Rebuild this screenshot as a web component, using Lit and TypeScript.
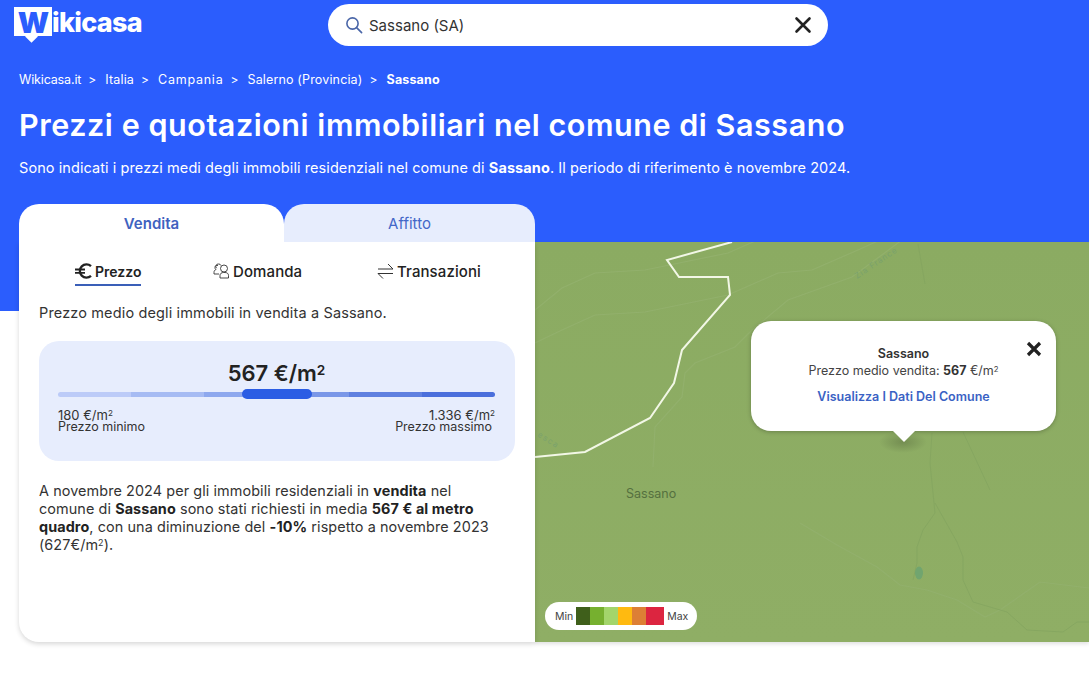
import { LitElement, css, html, svg } from "lit";
import { customElement } from "lit/decorators.js";

const legend = ["#3f5f1b", "#76b02f", "#a3d56b", "#ffba10", "#dd7f35", "#dc2540"];
const scale = ["#bccbf8", "#a6bbf3", "#8ea8ee", "#7a97e8", "#5f80e0", "#4b6fdc"];

// faint roads and contours, in map coordinates
const roads = [
  "M0 68 L27 46 L60 31 L110 28 L193 11 L243 -11",
  "M0 101 L27 88 L60 73 L110 70 L193 53 L243 31 L277 28 L323 8 L345 -2",
  "M118 225 L120 185 L147 155 L150 131 L160 121 L200 105 L217 88 L253 58 L317 35 L367 -2",
  "M265 281 L302 303 L342 325 L365 343 L392 348 L422 358 L450 375 L465 368 L505 340 L554 346",
];
const streams = [
  "M397 191 L395 221 L400 271 L388 288 L382 305 L382 321 L378 338",
  "M400 261 L422 300 L428 315 L428 338 L438 360 L472 370 L492 388 L528 390 L542 380 L554 380",
  "M428 190 L455 248",
  "M383 2 L390 42",
];

@customElement("app-root")
export class AppRoot extends LitElement {
  static styles = css`
    :host {
      display: block;
      width: 100%;
      height: 691px;
      background: #fff;
      overflow: hidden;
      font-family: Inter, "Open Sans", sans-serif;
      color: #222;
    }
    .hero {
      background: #2b5dfd;
      height: 311px;
      color: #fff;
      padding: 0 19px;
      box-sizing: border-box;
    }
    .top {
      display: flex;
      height: 59px;
      padding-top: 4px;
      box-sizing: border-box;
    }
    .logo {
      display: flex;
      align-items: flex-start;
      width: 314px;
      height: 42px;
      margin-left: -5px;
      padding-top: 3px;
      box-sizing: border-box;
      font-size: 27px;
      font-weight: 800;
      line-height: 32px;
      letter-spacing: -0.7px;
    }
    .logo-mark {
      position: relative;
      width: 38px;
      height: 29px;
      background: #fff;
      color: #2b5dfd;
      font-size: 29px;
      font-weight: 900;
      line-height: 31px;
      text-align: center;
    }
    .logo-mark::after {
      content: "";
      position: absolute;
      left: 13px;
      bottom: -5px;
      width: 9px;
      height: 9px;
      background: #fff;
      transform: rotate(45deg);
    }
    .logo-mark span {
      position: relative;
      z-index: 1;
    }
    .search {
      display: flex;
      align-items: center;
      width: 500px;
      height: 42px;
      background: #fff;
      border-radius: 21px;
      color: #333;
      font-size: 15px;
      box-sizing: border-box;
      padding: 0 16px 0 17px;
      gap: 6px;
    }
    .search .query {
      flex: 1;
    }
    .crumbs {
      display: flex;
      align-items: center;
      font-size: 12.5px;
      letter-spacing: 0.15px;
      height: 40px;
    }
    .crumbs a {
      display: flex;
      align-items: center;
    }
    .crumbs a.tight {
      letter-spacing: -0.15px;
    }
    .crumbs a.wide {
      letter-spacing: 0.75px;
    }
    .crumbs .sep {
      margin: 0 9px 0 7px;
      font-size: 12px;
    }
    .crumbs b {
      font-weight: 700;
    }
    h1 {
      margin: 5px 0 0;
      font-size: 30.5px;
      line-height: 42px;
      font-weight: 600;
      letter-spacing: 0.55px;
      white-space: nowrap;
    }
    .lead {
      margin: 11px 0 0;
      font-size: 14.5px;
      letter-spacing: 0.08px;
      line-height: 22px;
      white-space: nowrap;
    }
    .lead b {
      font-weight: 700;
    }
    .content {
      display: flex;
      padding-left: 19px;
      margin-top: -107px;
    }
    .card {
      width: 516px;
      height: 438px;
      flex: none;
      position: relative;
      z-index: 1;
    }
    .tabs {
      display: flex;
      height: 38px;
    }
    .tab {
      display: flex;
      align-items: center;
      justify-content: center;
      font-size: 15px;
      color: #4467c8;
      background: #e7edfd;
      border-radius: 20px 20px 0 0;
      width: 251px;
    }
    .tab.on {
      width: 265px;
      background: #fff;
      font-weight: 600;
      color: #3f62bf;
    }
    .panel {
      height: 400px;
      background: #fff;
      border-radius: 0 0 0 20px;
      box-shadow: 0 2px 5px rgba(0, 0, 0, 0.16);
    }
    .subtabs {
      display: flex;
      height: 46px;
      align-items: flex-end;
      position: relative;
    }
    .sub {
      position: absolute;
      top: 16px;
      display: flex;
      align-items: center;
      gap: 3px;
      font-size: 15px;
      letter-spacing: 0.1px;
      height: 26px;
      color: #222;
      font-weight: 500;
      white-space: nowrap;
    }
    .sub.on {
      font-size: 14px;
      letter-spacing: 0;
      gap: 3px;
      font-weight: 600;
      border-bottom: 2px solid #3a5fb8;
    }
    .body {
      padding: 0 20px;
    }
    .intro {
      margin: 14px 0 0;
      font-size: 14.5px;
      letter-spacing: 0.14px;
      line-height: 22px;
      color: #333;
    }
    .box {
      margin-top: 17px;
      width: 476px;
      height: 120px;
      background: #e7edfd;
      border-radius: 20px;
      box-sizing: border-box;
      padding: 17px 20px 0 19px;
    }
    .price {
      text-align: center;
      font-size: 22px;
      line-height: 30px;
      font-weight: 600;
    }
    sup {
      font-size: 0.62em;
      line-height: 0;
      vertical-align: 0.45em;
    }
    .bar {
      position: relative;
      display: flex;
      height: 5px;
      margin-top: 4px;
    }
    .bar i {
      flex: 1;
      height: 5px;
    }
    .bar i:first-child {
      border-radius: 3px 0 0 3px;
    }
    .bar i:nth-child(6) {
      border-radius: 0 3px 3px 0;
    }
    .marker {
      position: absolute;
      left: 184px;
      top: -3px;
      width: 70px;
      height: 10px;
      border-radius: 5px;
      background: #2b5de4;
    }
    .range {
      display: flex;
      justify-content: space-between;
      margin-top: 12px;
      font-size: 13px;
      line-height: 12px;
      color: #333;
    }
    .range div:last-child {
      text-align: right;
    }
    .range small {
      display: block;
      font-size: 12.5px;
    }
    .range div:last-child small {
      padding-right: 3px;
    }
    .text {
      margin: 21px 0 0;
      width: 458px;
      font-size: 14.4px;
      letter-spacing: 0.09px;
      line-height: 18px;
      color: #333;
    }
    .text b {
      font-weight: 700;
      color: #222;
    }
    .map {
      position: relative;
      flex: 1;
      height: 400px;
      margin-top: 38px;
      background: #8cab62;
      box-shadow: 0 2px 4px rgba(0, 0, 0, 0.12);
    }
    .map svg.bg {
      position: absolute;
      inset: 0;
      width: 100%;
      height: 100%;
    }
    .town {
      position: absolute;
      left: 91px;
      top: 244px;
      font-size: 12.5px;
      color: #55703f;
    }
    .popup {
      position: absolute;
      left: 216px;
      top: 79px;
      width: 305px;
      height: 110px;
      background: #fff;
      border-radius: 20px;
      box-shadow: 0 1px 4px rgba(0, 0, 0, 0.25);
      text-align: center;
      font-size: 12.5px;
      color: #444;
      box-sizing: border-box;
      padding-top: 24px;
      line-height: 17px;
    }
    .popup::before {
      content: "";
      position: absolute;
      left: 128px;
      top: 100%;
      width: 48px;
      height: 22px;
      background: radial-gradient(closest-side, rgba(0, 0, 0, 0.18), transparent);
    }
    .popup::after {
      content: "";
      position: absolute;
      left: 142px;
      top: 100%;
      width: 22px;
      height: 11px;
      background: #fff;
      clip-path: polygon(0 0, 100% 0, 50% 100%);
    }
    .popup strong {
      display: block;
      font-weight: 600;
      color: #333;
    }
    .popup b {
      font-weight: 700;
      color: #333;
    }
    .popup a {
      display: block;
      margin-top: 9px;
      color: #3a62c4;
      font-weight: 600;
    }
    .popup svg {
      position: absolute;
      right: 14px;
      top: 20px;
    }
    .legend {
      position: absolute;
      left: 10px;
      bottom: 12px;
      display: flex;
      align-items: center;
      width: 152px;
      height: 28px;
      padding: 0 10px;
      box-sizing: border-box;
      background: #fff;
      border-radius: 14px;
      font-size: 10.5px;
      color: #444;
      gap: 3px;
    }
    .legend i {
      width: 14px;
      height: 18px;
    }
    .legend i:nth-of-type(6) {
      width: 18px;
    }
    .swatches {
      display: flex;
    }
  `;

  render() {
    return html`
      <div class="hero">
        <div class="top">
          <div class="logo">
            <div class="logo-mark"><span>W</span></div>
            <span>ikicasa</span>
          </div>
          <div class="search">
            <svg width="18" height="18" viewBox="0 0 18 18" fill="none" stroke="#4a66a8" stroke-width="1.6">
              <circle cx="7.5" cy="7.5" r="5.6" />
              <path d="M11.6 11.6l5 5" stroke-linecap="round" />
            </svg>
            <span class="query">Sassano (SA)</span>
            <svg width="18" height="18" viewBox="0 0 18 18" stroke="#222" stroke-width="2.6" stroke-linecap="round">
              <path d="M2.5 2.5l13 13M15.5 2.5l-13 13" />
            </svg>
          </div>
        </div>
        <div class="crumbs">
          <a class="tight">Wikicasa.it</a><span class="sep">&gt;</span>
          <a>Italia</a><span class="sep">&gt;</span>
          <a class="wide">Campania</a><span class="sep">&gt;</span>
          <a>Salerno (Provincia)</a><span class="sep">&gt;</span>
          <b>Sassano</b>
        </div>
        <h1>Prezzi e quotazioni immobiliari nel comune di Sassano</h1>
        <p class="lead">
          Sono indicati i prezzi medi degli immobili residenziali nel comune di
          <b>Sassano</b>. Il periodo di riferimento è novembre 2024.
        </p>
      </div>
      <div class="content">
        <div class="card">
          <div class="tabs">
            <div class="tab on">Vendita</div>
            <div class="tab">Affitto</div>
          </div>
          <div class="panel">
            <div class="subtabs">
              <div class="sub on" style="left:56px">
                <svg width="17" height="16" viewBox="0 0 17 16" fill="none" stroke="#222" stroke-width="2.3">
                  <path d="M16 3.2A6.6 6.6 0 1 0 16 12.8" />
                  <path d="M0 6.5h10M0 9.8h10" stroke-width="1.8" />
                </svg>
                Prezzo
              </div>
              <div class="sub" style="left:194px">
                <svg width="17" height="16" viewBox="0 0 17 16" fill="none" stroke="#333" stroke-width="0.9">
                  <path d="M7 15V12.5C7 10.5 8.5 9.5 10.5 9.5h1.5c2 0 3.5 1 3.5 3V15z" />
                  <circle cx="11" cy="5.5" r="3.5" />
                  <path d="M8 2.6A2.4 2.4 0 0 0 5.4 1 2.4 2.4 0 0 0 3.6 5.2" />
                  <path d="M5 2.6A2 2 0 0 0 2 4.5 2 2 0 0 0 3 6.5C1.6 7 1 8 1 9.5v1.5h5" />
                </svg>
                Domanda
              </div>
              <div class="sub" style="left:358px">
                <svg width="17" height="16" viewBox="0 0 17 16" fill="none" stroke="#333" stroke-width="1">
                  <path d="M1 6h15M11 1l5 5M16 10.5H1M6 15.5l-5-5" />
                </svg>
                Transazioni
              </div>
            </div>
            <div class="body">
              <p class="intro">Prezzo medio degli immobili in vendita a Sassano.</p>
              <div class="box">
                <div class="price">567 €/m<sup>2</sup></div>
                <div class="bar">
                  ${scale.map((c) => html`<i style="background:${c}"></i>`)}
                  <div class="marker"></div>
                </div>
                <div class="range">
                  <div>180 €/m<sup>2</sup><small>Prezzo minimo</small></div>
                  <div>1.336 €/m<sup>2</sup><small>Prezzo massimo</small></div>
                </div>
              </div>
              <p class="text">
                A novembre 2024 per gli immobili residenziali in <b>vendita</b> nel
                comune di <b>Sassano</b> sono stati richiesti in media <b>567 € al metro
                quadro</b>, con una diminuzione del <b>-10%</b> rispetto a novembre 2023
                (627€/m<sup>2</sup>).
              </p>
            </div>
          </div>
        </div>
        <div class="map">
          <svg class="bg" viewBox="0 0 554 400" fill="none">
            <defs>
              <linearGradient id="tint" x1="0" y1="0" x2="0" y2="1">
                <stop offset="0" stop-color="#8bab62" />
                <stop offset="1" stop-color="#8fae65" />
              </linearGradient>
            </defs>
            <rect width="554" height="400" fill="url(#tint)" />
            ${roads.map((d) => svg`<path d=${d} stroke="#92b06c" stroke-width="1.2" />`)}
            ${streams.map((d) => svg`<path d=${d} stroke="#84a560" stroke-width="0.8" />`)}
            <ellipse cx="384" cy="331" rx="4" ry="6.5" fill="#71a56f" />
            <text x="322" y="37" transform="rotate(-34 322 37)" font-size="8" letter-spacing="1" fill="#7aa26c">Zia France</text>
            <text x="2" y="194" transform="rotate(32 2 194)" font-size="8" letter-spacing="1.5" fill="#7aa26c">esca</text>
            <path
              d="M197 0L132 18L144 35H193L195 53L147 108L139 141L115 176L50 210L0 215"
              stroke="#f2f7e6"
              stroke-width="2"
            />
          </svg>
          <span class="town">Sassano</span>
          <div class="popup">
            <strong>Sassano</strong>
            Prezzo medio vendita: <b>567</b> €/m<sup>2</sup>
            <a>Visualizza I Dati Del Comune</a>
            <svg width="16" height="16" viewBox="0 0 16 16" stroke="#222" stroke-width="3.2">
              <path d="M2 2l12 12M14 2L2 14" />
            </svg>
          </div>
          <div class="legend">
            Min
            <div class="swatches">${legend.map((c) => html`<i style="background:${c}"></i>`)}</div>
            Max
          </div>
        </div>
      </div>
    `;
  }
}
